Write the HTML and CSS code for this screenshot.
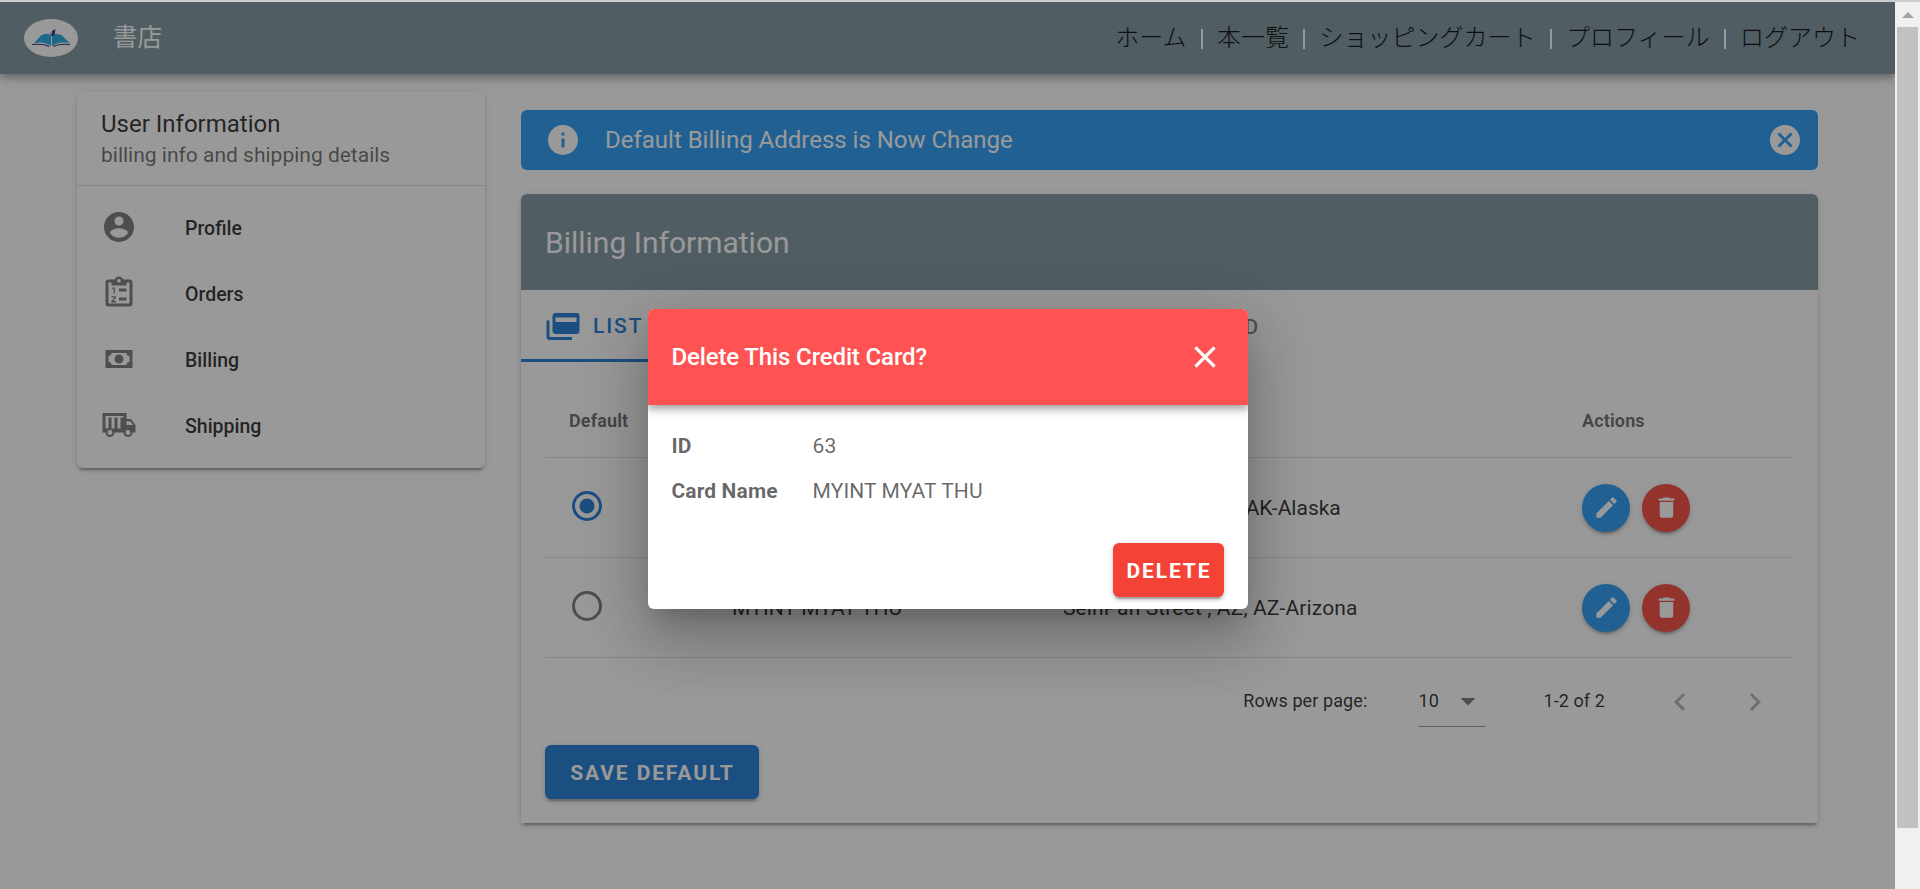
FILE: index.html
```html
<!DOCTYPE html>
<html lang="ja">
<head>
<meta charset="utf-8">
<title>書店</title>
<link rel="stylesheet" href="styles.css">
</head>
<body>
<svg class="defs" width="0" height="0" aria-hidden="true">
  <symbol id="i-account" viewBox="0 0 24 24"><path d="M12,19.2C9.5,19.2 7.29,17.92 6,16C6.03,14 10,12.9 12,12.9C14,12.9 17.97,14 18,16C16.71,17.92 14.5,19.2 12,19.2M12,5A3,3 0 0,1 15,8A3,3 0 0,1 12,11A3,3 0 0,1 9,8A3,3 0 0,1 12,5M12,2A10,10 0 0,0 2,12A10,10 0 0,0 12,22A10,10 0 0,0 22,12C22,6.47 17.5,2 12,2Z"/></symbol>
  <symbol id="i-orders" viewBox="0 0 24 24"><path d="M19,3H14.82C14.4,1.84 13.3,1 12,1C10.7,1 9.6,1.84 9.18,3H5A2,2 0 0,0 3,5V19A2,2 0 0,0 5,21H19A2,2 0 0,0 21,19V5A2,2 0 0,0 19,3M12,2.7A1.2,1.2 0 0,1 13.2,3.9A1.2,1.2 0 0,1 10.8,3.9A1.2,1.2 0 0,1 12,2.7M7,7H17V5H19V19H5V5H7V7M12,9H17V11H12V9M12,15H17V17H12V15Z" fill-rule="evenodd"/><path d="M7.2,8.7H8.8V12.3M7,14.6H9.5V15.3L7.4,17.3V17.8H10" fill="none" stroke="currentColor" stroke-width=".9"/></symbol>
  <symbol id="i-cash" viewBox="0 0 24 24"><path d="M3,6H21V18H3V6M12,9A3,3 0 0,1 15,12A3,3 0 0,1 12,15A3,3 0 0,1 9,12A3,3 0 0,1 12,9M7,8A2,2 0 0,1 5,10V14A2,2 0 0,1 7,16H17A2,2 0 0,1 19,14V10A2,2 0 0,1 17,8H7Z"/></symbol>
  <symbol id="i-truck" viewBox="0 0 24 24"><path fill-rule="evenodd" d="M1,4H17V8H20L23,12V17H21A3,3 0 0,1 15,17H9A3,3 0 0,1 3,17H1V4M3,6V14.3H5V7H7V14.3H9V7H11V14.3H13V7H15V6H3M17,9.5V12H21.46L19.5,9.5H17M6,15.4A1.6,1.6 0 0,0 6,18.6A1.6,1.6 0 0,0 6,15.4M18,15.4A1.6,1.6 0 0,0 18,18.6A1.6,1.6 0 0,0 18,15.4Z"/></symbol>
  <symbol id="i-info" viewBox="0 0 24 24"><path d="M13,9H11V7H13M13,17H11V11H13M12,2A10,10 0 0,0 2,12A10,10 0 0,0 12,22A10,10 0 0,0 22,12A10,10 0 0,0 12,2Z"/></symbol>
  <symbol id="i-cancel" viewBox="0 0 24 24"><path d="M12,2C17.53,2 22,6.47 22,12C22,17.53 17.53,22 12,22C6.47,22 2,17.53 2,12C2,6.47 6.47,2 12,2M15.59,7L12,10.59L8.41,7L7,8.41L10.59,12L7,15.59L8.41,17L12,13.41L15.59,17L17,15.59L13.41,12L17,8.41L15.59,7Z"/></symbol>
  <symbol id="i-cards" viewBox="0 0 24 24"><path fill-rule="evenodd" d="M21,4A2,2 0 0,1 23,6V16A2,2 0 0,1 21,18H7C5.89,18 5,17.1 5,16V6C5,4.89 5.89,4 7,4H21M7,7V10H21V7H7M3,20H18V22H3A2,2 0 0,1 1,20V9H3V20Z"/></symbol>
  <symbol id="i-pencil" viewBox="0 0 24 24"><path d="M20.71,7.04C21.1,6.65 21.1,6 20.71,5.63L18.37,3.29C18,2.9 17.35,2.9 16.96,3.29L15.12,5.12L18.87,8.87M3,17.25V21H6.75L17.81,9.93L14.06,6.18L3,17.25Z"/></symbol>
  <symbol id="i-delete" viewBox="0 0 24 24"><path d="M19,4H15.5L14.5,3H9.5L8.5,4H5V6H19M6,19A2,2 0 0,0 8,21H16A2,2 0 0,0 18,19V7H6V19Z"/></symbol>
  <symbol id="i-radio-on" viewBox="0 0 24 24"><path d="M12,20A8,8 0 0,1 4,12A8,8 0 0,1 12,4A8,8 0 0,1 20,12A8,8 0 0,1 12,20M12,2A10,10 0 0,0 2,12A10,10 0 0,0 12,22A10,10 0 0,0 22,12A10,10 0 0,0 12,2M12,7A5,5 0 0,0 7,12A5,5 0 0,0 12,17A5,5 0 0,0 17,12A5,5 0 0,0 12,7Z"/></symbol>
  <symbol id="i-radio-off" viewBox="0 0 24 24"><path d="M12,20A8,8 0 0,1 4,12A8,8 0 0,1 12,4A8,8 0 0,1 20,12A8,8 0 0,1 12,20M12,2A10,10 0 0,0 2,12A10,10 0 0,0 12,22A10,10 0 0,0 22,12A10,10 0 0,0 12,2Z"/></symbol>
  <symbol id="i-down" viewBox="0 0 24 24"><path d="M7,10L12,15L17,10H7Z"/></symbol>
  <symbol id="i-left" viewBox="0 0 24 24"><path d="M15.41,16.58L10.83,12L15.41,7.41L14,6L8,12L14,18L15.41,16.58Z"/></symbol>
  <symbol id="i-right" viewBox="0 0 24 24"><path d="M8.59,16.58L13.17,12L8.59,7.41L10,6L16,12L10,18L8.59,16.58Z"/></symbol>
  <symbol id="i-close" viewBox="0 0 24 24"><path stroke="currentColor" stroke-width=".3" d="M19,6.41L17.59,5L12,10.59L6.41,5L5,6.41L10.59,12L5,17.59L6.41,19L12,13.41L17.59,19L19,17.59L13.41,12L19,6.41Z"/></symbol>
</svg>

<div class="window">
  <div class="page">
    <header class="appbar">
      <svg class="logo" viewBox="0 0 54 38">
        <ellipse cx="27" cy="19" rx="27" ry="19" fill="#fff"/>
        <path d="M10 24 17 16.500Q23 13 27.300 17Q31 13 38 16.500L45.500 24Q34 22 28 27H26.500Q21 22 10 24Z" fill="#18a8e0"/>
        <path d="M8 25.500Q20 24.500 25 27.500M46 25.500Q35 24.500 29.500 27.500" fill="none" stroke="#2b2382" stroke-width="1.200"/>
        <path d="M27.500 17V27" stroke="#fff" stroke-width="1"/>
        <path d="M25 13 27.500 15.500 28 12 31.500 10 30.500 16 27.500 17Z" fill="#2b2382"/>
      </svg>
      <div class="brand">書店</div>
      <nav class="nav">
        <a>ホーム</a><i class="sep"></i><a>本一覧</a><i class="sep"></i><a>ショッピングカート</a><i class="sep"></i><a>プロフィール</a><i class="sep"></i><a>ログアウト</a>
      </nav>
    </header>

    <div class="content">
      <aside class="card side">
        <div class="side-head">
          <div class="side-title">User Information</div>
          <div class="side-sub">billing info and shipping details</div>
        </div>
        <ul class="menu">
          <li><svg class="icon"><use href="#i-account"/></svg><span>Profile</span></li>
          <li><svg class="icon"><use href="#i-orders"/></svg><span>Orders</span></li>
          <li><svg class="icon"><use href="#i-cash"/></svg><span>Billing</span></li>
          <li><svg class="icon"><use href="#i-truck"/></svg><span>Shipping</span></li>
        </ul>
      </aside>

      <main class="main">
        <div class="alert">
          <svg class="icon"><use href="#i-info"/></svg>
          <span class="alert-text">Default Billing Address is Now Change</span>
          <svg class="icon"><use href="#i-cancel"/></svg>
        </div>

        <section class="card billing">
          <h1 class="billing-title">Billing Information</h1>
          <div class="tabs">
            <div class="tab tab-active"><svg class="icon"><use href="#i-cards"/></svg><span>List of Credit Card</span></div>
            <div class="tab tab-next"><span>Add New Credit Card</span></div>
          </div>
          <div class="table">
            <div class="row head"><span>Default</span><span>Card Name</span><span>Address</span><span>Actions</span></div>
            <div class="row">
              <svg class="icon radio radio-on"><use href="#i-radio-on"/></svg>
              <span>MYINT MYAT THU</span>
              <span class="address-tight">SeinPan Street, AK, AK-Alaska</span>
              <span class="actions"><b class="fab edit"><svg><use href="#i-pencil"/></svg></b><b class="fab del"><svg><use href="#i-delete"/></svg></b></span>
            </div>
            <div class="row">
              <svg class="icon radio"><use href="#i-radio-off"/></svg>
              <span>MYINT MYAT THU</span>
              <span>SeinPan Street , AZ, AZ-Arizona</span>
              <span class="actions"><b class="fab edit"><svg><use href="#i-pencil"/></svg></b><b class="fab del"><svg><use href="#i-delete"/></svg></b></span>
            </div>
          </div>
          <div class="pager">
            <span class="rows-label">Rows per page:</span>
            <span class="select"><span>10</span><svg class="icon"><use href="#i-down"/></svg></span>
            <span class="range">1-2 of 2</span>
            <svg class="icon prev"><use href="#i-left"/></svg>
            <svg class="icon"><use href="#i-right"/></svg>
          </div>
          <div class="btn save">Save Default</div>
        </section>
      </main>
    </div>

    <div class="scrim">
      <div class="dialog">
        <div class="dialog-head"><span>Delete This Credit Card?</span><svg class="icon"><use href="#i-close"/></svg></div>
        <dl class="details">
          <dt>ID</dt><dd>63</dd>
          <dt>Card Name</dt><dd>MYINT MYAT THU</dd>
        </dl>
        <div class="dialog-actions"><div class="btn confirm">Delete</div></div>
      </div>
    </div>
  </div>
  <div class="scrollbar"><div class="arrow"></div><div class="thumb"></div></div>
</div>
</body>
</html>
```
FILE: styles.css
```css
* { box-sizing: border-box; }
body {
  margin: 0;
  height: 889px;
  overflow: hidden;
  font-family: Roboto, "Noto Sans CJK JP", sans-serif;
  color: rgba(0, 0, 0, .87);
}
.defs { position: absolute; }
.icon { width: 36px; height: 36px; flex: none; fill: currentColor; }

.window { display: flex; height: 889px; border-top: 2px solid #cdcdcd; }
.page { position: relative; width: 1895px; background: #fff; overflow: hidden; }

.appbar {
  display: flex;
  align-items: center;
  height: 72px;
  padding: 0 35px 0 24px;
  background: #78909c;
  color: #fff;
  box-shadow: 0 3px 6px -1.5px rgba(0,0,0,.2), 0 6px 7.5px rgba(0,0,0,.14), 0 1.5px 15px rgba(0,0,0,.12);
}
.logo { width: 54px; height: 38px; }
.brand { margin-left: 35px; font-size: 24.5px; line-height: 36px; }
.nav { display: flex; align-items: center; margin-left: auto; font-size: 24px; font-weight: 300; line-height: 36px; color: #000; }
.nav a { white-space: nowrap; }
.sep { width: 2px; height: 20px; margin: 2px 14.25px 0; background: #fff; }

.content { display: flex; align-items: flex-start; gap: 36px; padding: 18px 77px 0; }
.card {
  background: #fff;
  border-radius: 6px;
  box-shadow: 0 4.5px 1.5px -3px rgba(0,0,0,.2), 0 3px 3px rgba(0,0,0,.14), 0 1.5px 7.5px rgba(0,0,0,.12);
}
.side { width: 408px; height: 376px; }
.side-head { height: 94px; padding: 17px 24px 0; border-bottom: 1px solid rgba(0,0,0,.12); }
.side-title { font-size: 24px; line-height: 30px; }
.side-sub { font-size: 21px; line-height: 32px; color: rgba(0,0,0,.6); }
.menu { list-style: none; margin: 0; padding: 8px 24px; }
.menu li { display: flex; align-items: center; gap: 48px; height: 66px; font-size: 19.5px; font-weight: 500; }
.menu span { padding-top: 2px; }
.menu .icon { color: rgba(0,0,0,.54); }

.main { width: 1297px; padding-top: 18px; }
.alert { display: flex; align-items: center; height: 60px; padding: 0 15px 0 24px; border-radius: 6px; background: #2196f3; color: #fff; }
.alert-text { flex: 1; margin-left: 24px; font-size: 24px; letter-spacing: -.01px; }

.billing { height: 629px; margin-top: 24px; overflow: hidden; border-radius: 6px 6px 0 0; }
.billing-title { height: 96px; margin: 0; padding: 0 24px; background: #78909c; color: #fff; font-size: 30px; font-weight: 400; line-height: 97px; }
.tabs { display: flex; height: 72px; font-size: 21px; font-weight: 500; letter-spacing: .0892857em; text-transform: uppercase; }
.tab { display: flex; align-items: center; gap: 12px; padding: 0 24px; white-space: nowrap; color: rgba(0,0,0,.54); }
.tab span { padding-top: 2px; }
.tab-active { width: 362px; color: #1976d2; border-bottom: 3px solid #1976d2; }
.tab-next { width: 401px; justify-content: flex-end; }

.table { padding: 23px 24px 0; }
.row { display: grid; grid-template-columns: 163px 331px 519px 236px; align-items: center; height: 100px; border-bottom: 1px solid rgba(0,0,0,.12); font-size: 21px; letter-spacing: .13px; }
.row > * { margin-left: 24px; white-space: nowrap; }
.head { height: 73px; padding-bottom: 2px; font-size: 18px; font-weight: 700; color: rgba(0,0,0,.6); }
.address-tight { letter-spacing: 0; }
.radio { color: rgba(0,0,0,.54); margin-bottom: 4px; }
.radio-on { color: #1976d2; }
.actions { display: flex; gap: 12px; }
.fab { display: flex; align-items: center; justify-content: center; width: 48px; height: 48px; border-radius: 50%; color: #fff; box-shadow: 0 4.5px 1.5px -3px rgba(0,0,0,.2), 0 3px 3px rgba(0,0,0,.14), 0 1.5px 7.5px rgba(0,0,0,.12); }
.fab svg { width: 27px; height: 27px; fill: currentColor; }
.edit { background: #2196f3; }
.del { background: #f44336; }

.pager { display: flex; align-items: center; justify-content: flex-end; height: 87px; padding-right: 45px; font-size: 18px; letter-spacing: .1px; }
.pager span span, .rows-label, .range { padding-bottom: 2px; }
.select { display: flex; align-items: center; width: 68px; height: 50px; margin-left: 51px; border-bottom: 1px solid rgba(0,0,0,.42); }
.select .icon { margin-left: auto; color: rgba(0,0,0,.54); }
.range { margin: 0 57px; }
.pager > .icon { color: rgba(0,0,0,.3); }
.prev { margin-right: 39px; }

.btn {
  display: flex; align-items: center; justify-content: center;
  height: 54px; padding: 2px 0 0 1px; border-radius: 6px; color: #fff;
  font-size: 21px; font-weight: 700; letter-spacing: .0892857em; text-transform: uppercase;
  box-shadow: 0 4.5px 1.5px -3px rgba(0,0,0,.2), 0 3px 3px rgba(0,0,0,.14), 0 1.5px 7.5px rgba(0,0,0,.12);
}
.save { width: 214px; margin-left: 24px; background: #1976d2; }

.scrim { position: absolute; inset: 0; display: flex; justify-content: center; align-items: flex-start; padding-top: 307px; padding-left: 1px; background: rgba(33,33,33,.46); }
.dialog {
  width: 600px; height: 300px; border-radius: 6px; background: #fff;
  box-shadow: 0 16.5px 22.5px -10.5px rgba(0,0,0,.2), 0 36px 57px 4.5px rgba(0,0,0,.14), 0 13.5px 69px 12px rgba(0,0,0,.12);
}
.dialog-head {
  display: flex; align-items: center; justify-content: space-between;
  height: 96px; padding: 0 25px 0 23.5px; border-radius: 6px 6px 0 0;
  background: #ff5252; color: #fff; font-size: 24px; font-weight: 500; letter-spacing: -.13px;
  box-shadow: 0 3px 6px -1.5px rgba(0,0,0,.2), 0 6px 7.5px rgba(0,0,0,.14), 0 1.5px 15px rgba(0,0,0,.12);
  clip-path: inset(0 0 -24px 0);
}
.details { display: grid; grid-template-columns: 141px 1fr; grid-auto-rows: 45px; align-items: center; margin: 0; padding: 18px 23.5px 0; font-size: 21px; letter-spacing: .12px; color: rgba(0,0,0,.6); }
.details dt { font-weight: 700; }
.details dd { margin: 0; }
.dialog-actions { display: flex; justify-content: flex-end; padding: 30px 24px 0; }
.confirm { width: 111px; background: #f44336; }

.scrollbar { display: flex; flex-direction: column; width: 25px; padding: 10px 2px 0; background: #f0f0f0; }
.arrow { width: 12px; height: 6px; margin: 0 0 9px 5px; background: #a3a3a3; clip-path: polygon(50% 0, 100% 100%, 0 100%); }
.thumb { width: 21px; height: 801px; background: #c1c1c1; }
```
